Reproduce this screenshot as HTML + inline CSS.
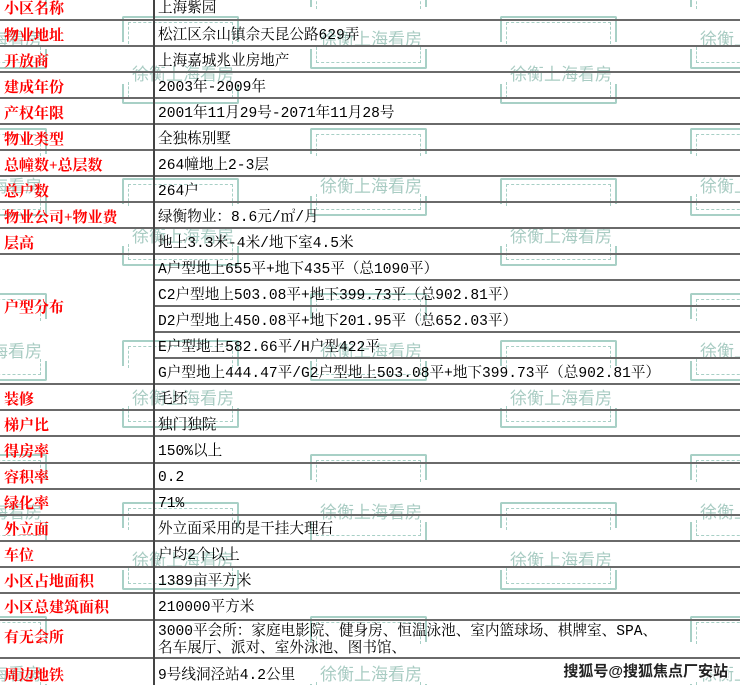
<!DOCTYPE html>
<html><head><meta charset="utf-8"><style>
html,body{margin:0;width:740px;height:685px;overflow:hidden;}
body{background:#fff;position:relative;font-family:"Liberation Serif","Noto Serif CJK SC",serif;}
#c{position:absolute;left:0;top:0;width:740px;height:685px;overflow:hidden;}
.h{position:absolute;left:0;width:740px;height:2px;background:#6a6a6a;}
.v{position:absolute;left:153px;top:0;width:2px;height:685px;background:#444;}
.l{position:absolute;left:4px;color:#f00;font-weight:bold;font-size:15px;line-height:16px;white-space:nowrap;}
.t{position:absolute;left:158px;color:#000;font-family:"Liberation Mono","Noto Serif CJK SC",monospace;font-size:14.6px;line-height:16px;white-space:nowrap;}
.w{position:absolute;width:117px;height:88px;}
.w .tb{position:absolute;left:0;top:0;width:113px;height:24px;border:2px solid #a8d0c6;border-bottom:none;border-radius:2px 2px 0 0;}
.w .tb i,.w .bb i{position:absolute;left:4px;right:4px;border:1.5px dashed #a8d0c6;}
.w .tb i{top:4px;bottom:-2px;border-bottom:none;}
.w .bb{position:absolute;left:0;top:68px;width:113px;height:18px;border:2px solid #a8d0c6;border-top:none;border-radius:0 0 2px 2px;}
.w .bb i{top:-2px;bottom:4px;border-top:none;}
.w span{position:absolute;left:10px;top:49px;font-family:"Liberation Sans","Noto Sans CJK SC",sans-serif;font-size:17px;color:#a9ccc3;white-space:nowrap;line-height:20px;}
.wm{position:absolute;right:12px;top:660px;font-family:"Liberation Sans","Noto Sans CJK SC",sans-serif;font-weight:bold;font-size:15px;color:#222;text-shadow:0 0 2px #fff,0 0 2px #fff,1px 1px 0 #fff,-1px -1px 0 #fff;white-space:nowrap;}
</style></head><body><div id="c">

<div class="w" style="left:122px;top:16px"><div class="tb"><i></i></div><span>徐衡上海看房</span><div class="bb"><i></i></div></div>
<div class="w" style="left:500px;top:16px"><div class="tb"><i></i></div><span>徐衡上海看房</span><div class="bb"><i></i></div></div>
<div class="w" style="left:122px;top:178px"><div class="tb"><i></i></div><span>徐衡上海看房</span><div class="bb"><i></i></div></div>
<div class="w" style="left:500px;top:178px"><div class="tb"><i></i></div><span>徐衡上海看房</span><div class="bb"><i></i></div></div>
<div class="w" style="left:122px;top:340px"><div class="tb"><i></i></div><span>徐衡上海看房</span><div class="bb"><i></i></div></div>
<div class="w" style="left:500px;top:340px"><div class="tb"><i></i></div><span>徐衡上海看房</span><div class="bb"><i></i></div></div>
<div class="w" style="left:122px;top:502px"><div class="tb"><i></i></div><span>徐衡上海看房</span><div class="bb"><i></i></div></div>
<div class="w" style="left:500px;top:502px"><div class="tb"><i></i></div><span>徐衡上海看房</span><div class="bb"><i></i></div></div>
<div class="w" style="left:310px;top:-19px"><div class="tb"><i></i></div><span>徐衡上海看房</span><div class="bb"><i></i></div></div>
<div class="w" style="left:690px;top:-19px"><div class="tb"><i></i></div><span>徐衡上海看房</span><div class="bb"><i></i></div></div>
<div class="w" style="left:-70px;top:-19px"><div class="tb"><i></i></div><span>徐衡上海看房</span><div class="bb"><i></i></div></div>
<div class="w" style="left:310px;top:128px"><div class="tb"><i></i></div><span>徐衡上海看房</span><div class="bb"><i></i></div></div>
<div class="w" style="left:690px;top:128px"><div class="tb"><i></i></div><span>徐衡上海看房</span><div class="bb"><i></i></div></div>
<div class="w" style="left:-70px;top:128px"><div class="tb"><i></i></div><span>徐衡上海看房</span><div class="bb"><i></i></div></div>
<div class="w" style="left:310px;top:293px"><div class="tb"><i></i></div><span>徐衡上海看房</span><div class="bb"><i></i></div></div>
<div class="w" style="left:690px;top:293px"><div class="tb"><i></i></div><span>徐衡上海看房</span><div class="bb"><i></i></div></div>
<div class="w" style="left:-70px;top:293px"><div class="tb"><i></i></div><span>徐衡上海看房</span><div class="bb"><i></i></div></div>
<div class="w" style="left:310px;top:454px"><div class="tb"><i></i></div><span>徐衡上海看房</span><div class="bb"><i></i></div></div>
<div class="w" style="left:690px;top:454px"><div class="tb"><i></i></div><span>徐衡上海看房</span><div class="bb"><i></i></div></div>
<div class="w" style="left:-70px;top:454px"><div class="tb"><i></i></div><span>徐衡上海看房</span><div class="bb"><i></i></div></div>
<div class="w" style="left:310px;top:616px"><div class="tb"><i></i></div><span>徐衡上海看房</span><div class="bb"><i></i></div></div>
<div class="w" style="left:690px;top:616px"><div class="tb"><i></i></div><span>徐衡上海看房</span><div class="bb"><i></i></div></div>
<div class="w" style="left:-70px;top:616px"><div class="tb"><i></i></div><span>徐衡上海看房</span><div class="bb"><i></i></div></div>

<div class="h" style="top:19px"></div>
<div class="h" style="top:45px"></div>
<div class="h" style="top:71px"></div>
<div class="h" style="top:97px"></div>
<div class="h" style="top:123px"></div>
<div class="h" style="top:149px"></div>
<div class="h" style="top:175px"></div>
<div class="h" style="top:201px"></div>
<div class="h" style="top:227px"></div>
<div class="h" style="top:253px"></div>
<div class="h" style="top:279px;left:154px;width:586px"></div>
<div class="h" style="top:305px;left:154px;width:586px"></div>
<div class="h" style="top:331px;left:154px;width:586px"></div>
<div class="h" style="top:357px;left:154px;width:586px"></div>
<div class="h" style="top:383px"></div>
<div class="h" style="top:409px"></div>
<div class="h" style="top:435px"></div>
<div class="h" style="top:462px"></div>
<div class="h" style="top:488px"></div>
<div class="h" style="top:514px"></div>
<div class="h" style="top:540px"></div>
<div class="h" style="top:566px"></div>
<div class="h" style="top:592px"></div>
<div class="h" style="top:619px"></div>
<div class="h" style="top:657px"></div>
<div class="v"></div>

<div class="l" style="top:1px">小区名称</div><div class="t" style="top:1px">上海紫园</div>
<div class="l" style="top:28px">物业地址</div><div class="t" style="top:28px">松江区佘山镇佘天昆公路629弄</div>
<div class="l" style="top:54px">开放商</div><div class="t" style="top:54px">上海嘉城兆业房地产</div>
<div class="l" style="top:80px">建成年份</div><div class="t" style="top:80px">2003年-2009年</div>
<div class="l" style="top:106px">产权年限</div><div class="t" style="top:106px">2001年11月29号-2071年11月28号</div>
<div class="l" style="top:132px">物业类型</div><div class="t" style="top:132px">全独栋别墅</div>
<div class="l" style="top:158px">总幢数+总层数</div><div class="t" style="top:158px">264幢地上2-3层</div>
<div class="l" style="top:184px">总户数</div><div class="t" style="top:184px">264户</div>
<div class="l" style="top:210px">物业公司+物业费</div><div class="t" style="top:210px">绿衡物业：8.6元/㎡/月</div>
<div class="l" style="top:236px">层高</div><div class="t" style="top:236px">地上3.3米-4米/地下室4.5米</div>
<div class="l" style="top:300px">户型分布</div>
<div class="t" style="top:262px">A户型地上655平+地下435平（总1090平）</div>
<div class="t" style="top:288px">C2户型地上503.08平+地下399.73平（总902.81平）</div>
<div class="t" style="top:314px">D2户型地上450.08平+地下201.95平（总652.03平）</div>
<div class="t" style="top:340px">E户型地上582.66平/H户型422平</div>
<div class="t" style="top:366px">G户型地上444.47平/G2户型地上503.08平+地下399.73平（总902.81平）</div>
<div class="l" style="top:392px">装修</div><div class="t" style="top:392px">毛坯</div>
<div class="l" style="top:418px">梯户比</div><div class="t" style="top:418px">独门独院</div>
<div class="l" style="top:444px">得房率</div><div class="t" style="top:444px">150%以上</div>
<div class="l" style="top:470px">容积率</div><div class="t" style="top:470px">0.2</div>
<div class="l" style="top:496px">绿化率</div><div class="t" style="top:496px">71%</div>
<div class="l" style="top:522px">外立面</div><div class="t" style="top:522px">外立面采用的是干挂大理石</div>
<div class="l" style="top:548px">车位</div><div class="t" style="top:548px">户均2个以上</div>
<div class="l" style="top:574px">小区占地面积</div><div class="t" style="top:574px">1389亩平方米</div>
<div class="l" style="top:600px">小区总建筑面积</div><div class="t" style="top:600px">210000平方米</div>
<div class="l" style="top:630px">有无会所</div>
<div class="t" style="top:624px">3000平会所：家庭电影院、健身房、恒温泳池、室内篮球场、棋牌室、SPA、</div>
<div class="t" style="top:641px">名车展厅、派对、室外泳池、图书馆、</div>
<div class="l" style="top:668px">周边地铁</div><div class="t" style="top:668px">9号线洞泾站4.2公里</div>

<div class="wm">搜狐号@搜狐焦点厂安站</div>
</div></body></html>
